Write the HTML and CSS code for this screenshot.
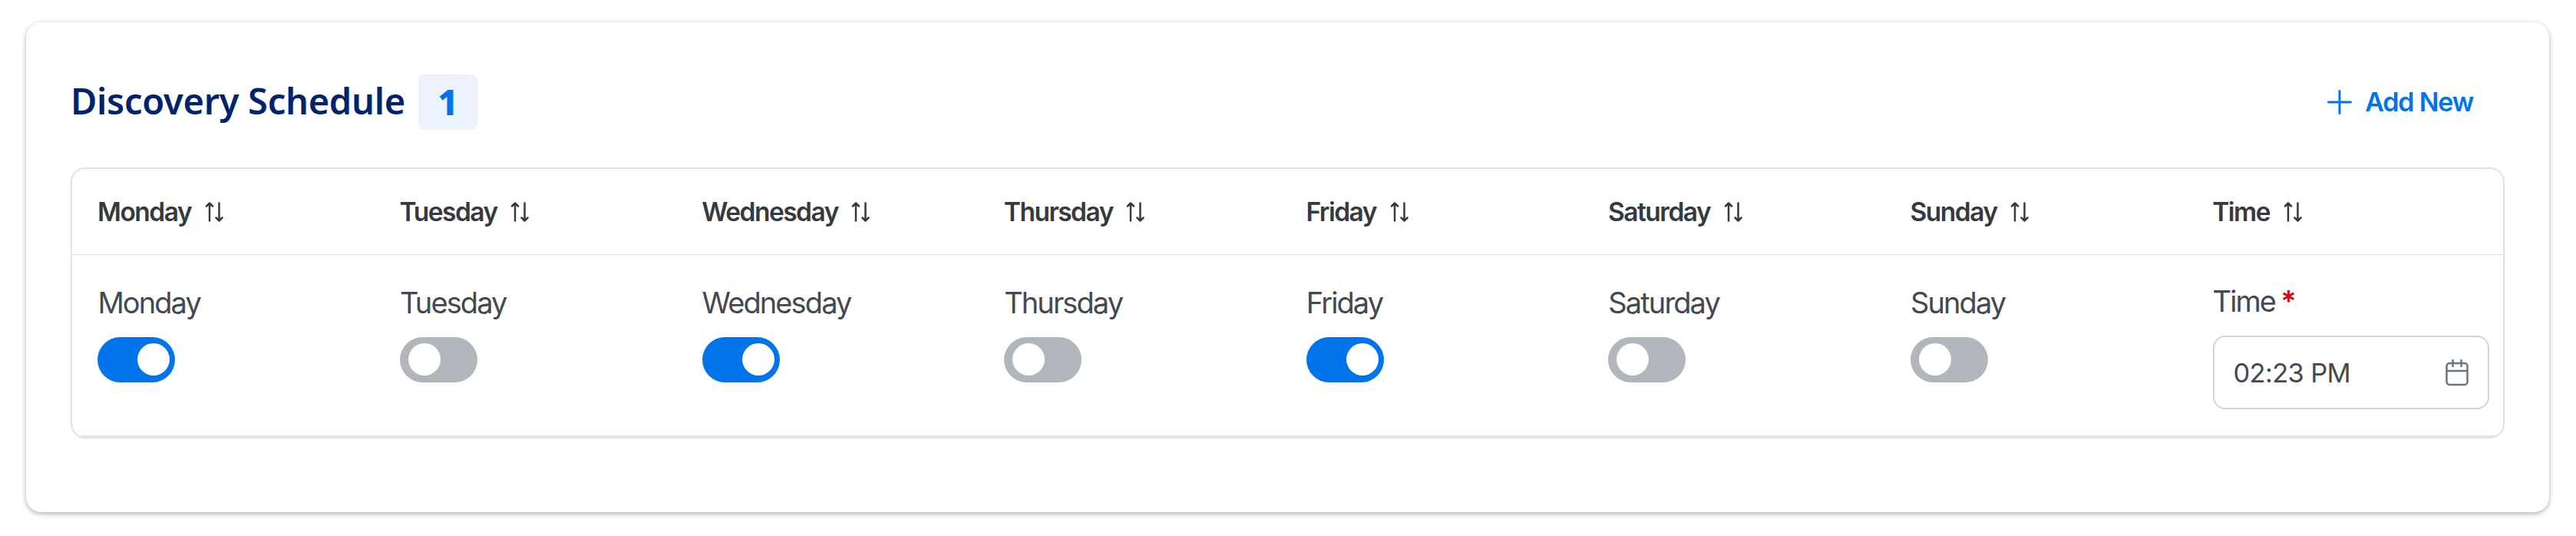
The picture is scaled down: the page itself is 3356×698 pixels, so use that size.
FILE: index.html
```html
<!DOCTYPE html>
<html lang="en">
<head>
<meta charset="utf-8">
<title>Discovery Schedule</title>
<link rel="stylesheet" href="styles.css">
</head>
<body>
<svg class="defs" width="0" height="0" aria-hidden="true">
  <symbol id="sort" viewBox="0 0 24 26"><path d="M6 24.500V2M2 5.500l4-4 4 4M18.500 1.500V24M14.500 20.500l4 4 4-4"/></symbol>
</svg>
<main class="card">
  <header class="head">
    <h1 class="title">Discovery Schedule</h1>
    <span class="badge">1</span>
    <button class="add"><svg class="plus" viewBox="0 0 32 32"><path d="M16 1.500V30.500M1.500 16H30.500"/></svg><span class="add-text">Add New</span></button>
  </header>
  <section class="table">
    <div class="row columns">
      <div class="th"><span>Monday</span><svg class="sort"><use href="#sort"/></svg></div>
      <div class="th"><span>Tuesday</span><svg class="sort"><use href="#sort"/></svg></div>
      <div class="th"><span>Wednesday</span><svg class="sort"><use href="#sort"/></svg></div>
      <div class="th"><span>Thursday</span><svg class="sort"><use href="#sort"/></svg></div>
      <div class="th"><span>Friday</span><svg class="sort"><use href="#sort"/></svg></div>
      <div class="th"><span>Saturday</span><svg class="sort"><use href="#sort"/></svg></div>
      <div class="th"><span>Sunday</span><svg class="sort"><use href="#sort"/></svg></div>
      <div class="th"><span>Time</span><svg class="sort"><use href="#sort"/></svg></div>
    </div>
    <div class="row values">
      <div class="td"><span class="label">Monday</span><span class="switch on"></span></div>
      <div class="td"><span class="label">Tuesday</span><span class="switch"></span></div>
      <div class="td"><span class="label">Wednesday</span><span class="switch on"></span></div>
      <div class="td"><span class="label">Thursday</span><span class="switch"></span></div>
      <div class="td"><span class="label">Friday</span><span class="switch on"></span></div>
      <div class="td"><span class="label">Saturday</span><span class="switch"></span></div>
      <div class="td"><span class="label">Sunday</span><span class="switch"></span></div>
      <div class="td time">
        <span class="label">Time<span class="req">*</span></span>
        <div class="input"><span class="value">02:23 PM</span><svg class="cal" viewBox="0 0 30 36"><rect x="1.500" y="6" width="27" height="28" rx="3.500"/><path d="M2 16H28M9.500 2V10M20.500 2V10"/></svg></div>
      </div>
    </div>
  </section>
</main>
</body>
</html>
```
FILE: styles.css
```css
* { box-sizing: border-box; }
body { margin: 0; padding: 29px 35px 31px 34px; background: #fff; font-family: Inter, sans-serif; }
.defs { display: block; height: 0; }
.card {
  height: 638px; padding: 68px 58px 0; border-radius: 20px; background: #fff;
  box-shadow: 0 2px 6px rgba(0, 0, 0, .32);
}
.head { display: flex; align-items: center; height: 72px; margin-bottom: 49px; padding-right: 41px; }
.title {
  margin: 0; width: 453px; white-space: nowrap;
  font: 600 47px/68px "Noto Sans", sans-serif; letter-spacing: -.300px; color: #00246b;
  padding-bottom: 4px;
}
.badge {
  width: 77px; height: 72px; border-radius: 8px; background: #ecf3fc; text-align: center;
  font: 800 46px/70px "Noto Sans", sans-serif; color: #0075eb;
}
.add {
  display: flex; align-items: center; gap: 17px; margin-left: auto; padding: 0; border: 0;
  background: none; color: #0075eb; font: 600 34px/40px Inter, sans-serif; letter-spacing: -1.200px; white-space: nowrap;
}
.plus { width: 32px; height: 32px; fill: none; stroke: currentColor; stroke-width: 3; stroke-linecap: round; }
.table { height: 353px; border: 2px solid #e1e3e9; border-radius: 19px; overflow: hidden; }
.row { display: grid; grid-template-columns: repeat(7, 393.6px) 1fr; }
.columns { height: 112px; border-bottom: 1px solid #dfe1e5; }
.values { height: 237px; border-bottom: 2px solid #dfe2e6; }
.th {
  display: flex; align-items: center; gap: 17.500px; padding-left: 33px;
  color: #343a40; font-weight: 600; font-size: 33.500px; letter-spacing: -1.500px;
}
.sort { width: 24px; height: 26px; fill: none; stroke: #343a40; stroke-width: 2.500; stroke-linecap: round; stroke-linejoin: round; }
.td { padding: 38px 0 0 33.400px; }
.label { display: block; height: 69px; line-height: 48px; font-size: 38px; letter-spacing: -1.900px; color: #444950; white-space: nowrap; }
.switch { display: flex; width: 101px; height: 59px; padding: 8px 11px; border-radius: 30px; background: #b1b6bd; }
.switch::before { content: ""; width: 42px; height: 42px; border-radius: 50%; background: #fff; }
.switch.on { padding-right: 7px; justify-content: flex-end; background: #0075eb; }
.time { padding-top: 36px; }
.req { margin-left: 7px; color: #cc0c0c; font-weight: 600; }
.input {
  display: flex; align-items: center; justify-content: space-between; width: 360px; height: 96px;
  padding: 0 25px; border: 2px solid #ced4da; border-radius: 16px;
}
.value { font-size: 34.500px; letter-spacing: -.700px; color: #444950; white-space: nowrap; }
.cal { width: 30px; height: 36px; fill: none; stroke: #6c757d; stroke-width: 2.500; stroke-linecap: round; }
```
